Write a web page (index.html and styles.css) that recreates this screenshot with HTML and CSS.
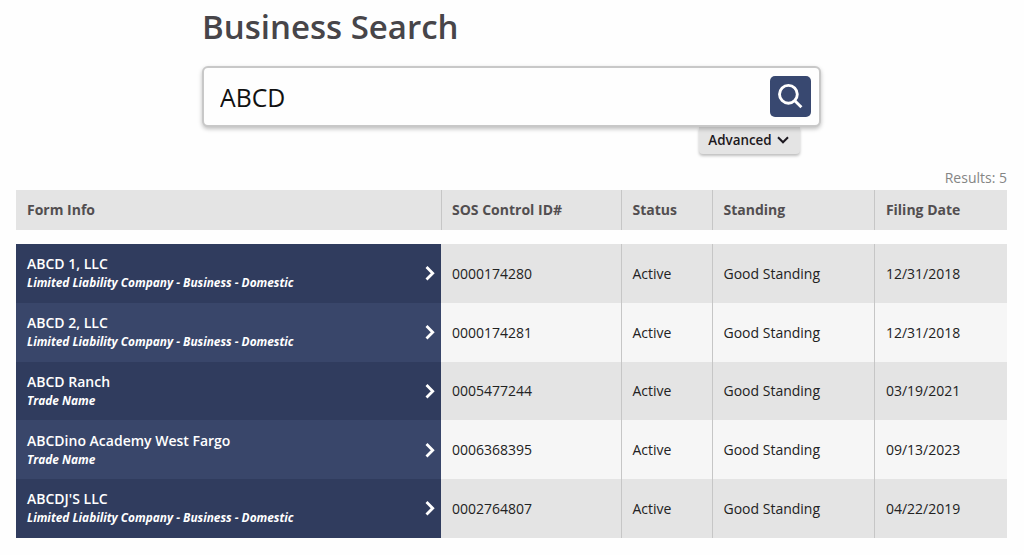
FILE: index.html
```html
<!DOCTYPE html>
<html lang="en">
<head>
    <meta charset="UTF-8">
    <meta name="viewport" content="width=device-width, initial-scale=1.0">
    <title>Business Search</title>
    <link rel="stylesheet" href="styles.css">
</head>
<body>
    <div class="search">
        <h1>Business Search</h1>
        <div class="search-box">
            <input type="text" class="search-input" value="ABCD" aria-label="Search">
            <button class="search-btn" aria-label="Run search">
                <svg width="41" height="41" viewBox="0 0 41 41">
                    <circle cx="18.4" cy="18.3" r="8.9"/>
                    <path d="M24.6 24.5L31.4 31.3"/>
                </svg>
            </button>
        </div>
        <button class="advanced">
            <span>Advanced</span>
            <svg width="12" height="8" viewBox="0 0 12 8"><path d="M1 1.3L6 6.3L11 1.3"/></svg>
        </button>
    </div>

    <div class="results">Results: 5</div>

    <div class="table">
        <div class="row head">
            <div class="cell">Form Info</div>
            <div class="cell">SOS Control ID#</div>
            <div class="cell">Status</div>
            <div class="cell">Standing</div>
            <div class="cell">Filing Date</div>
        </div>
        <div class="rows">
            <div class="row">
                <div class="info">
                    <div>
                        <div class="name">ABCD 1, LLC</div>
                        <div class="type">Limited Liability Company - Business - Domestic</div>
                    </div>
                    <svg class="arrow" width="10" height="16" viewBox="0 0 10 16"><path d="M1.5 2L7.7 8.2L1.5 14.4"/></svg>
                </div>
                <div class="cell">0000174280</div>
                <div class="cell">Active</div>
                <div class="cell">Good Standing</div>
                <div class="cell">12/31/2018</div>
            </div>
            <div class="row">
                <div class="info">
                    <div>
                        <div class="name">ABCD 2, LLC</div>
                        <div class="type">Limited Liability Company - Business - Domestic</div>
                    </div>
                    <svg class="arrow" width="10" height="16" viewBox="0 0 10 16"><path d="M1.5 2L7.7 8.2L1.5 14.4"/></svg>
                </div>
                <div class="cell">0000174281</div>
                <div class="cell">Active</div>
                <div class="cell">Good Standing</div>
                <div class="cell">12/31/2018</div>
            </div>
            <div class="row">
                <div class="info">
                    <div>
                        <div class="name">ABCD Ranch</div>
                        <div class="type">Trade Name</div>
                    </div>
                    <svg class="arrow" width="10" height="16" viewBox="0 0 10 16"><path d="M1.5 2L7.7 8.2L1.5 14.4"/></svg>
                </div>
                <div class="cell">0005477244</div>
                <div class="cell">Active</div>
                <div class="cell">Good Standing</div>
                <div class="cell">03/19/2021</div>
            </div>
            <div class="row">
                <div class="info">
                    <div>
                        <div class="name">ABCDino Academy West Fargo</div>
                        <div class="type">Trade Name</div>
                    </div>
                    <svg class="arrow" width="10" height="16" viewBox="0 0 10 16"><path d="M1.5 2L7.7 8.2L1.5 14.4"/></svg>
                </div>
                <div class="cell">0006368395</div>
                <div class="cell">Active</div>
                <div class="cell">Good Standing</div>
                <div class="cell">09/13/2023</div>
            </div>
            <div class="row">
                <div class="info">
                    <div>
                        <div class="name">ABCDJ'S LLC</div>
                        <div class="type">Limited Liability Company - Business - Domestic</div>
                    </div>
                    <svg class="arrow" width="10" height="16" viewBox="0 0 10 16"><path d="M1.5 2L7.7 8.2L1.5 14.4"/></svg>
                </div>
                <div class="cell">0002764807</div>
                <div class="cell">Active</div>
                <div class="cell">Good Standing</div>
                <div class="cell">04/22/2019</div>
            </div>
        </div>
    </div>
</body>
</html>
```
FILE: styles.css
```css
* {
    box-sizing: border-box;
}
body {
    margin: 0;
    font-family: "Open Sans", sans-serif;
    font-size: 14px;
    color: #222;
    background-color: #fefefe;
}
svg {
    display: block;
    fill: none;
}
button {
    border: none;
    padding: 0;
    font-family: inherit;
}
.search {
    width: 619px;
    margin-left: 202px;
    display: flex;
    flex-direction: column;
}
h1 {
    margin: 0;
    height: 66px;
    line-height: 53px;
    font-size: 33px;
    font-weight: 600;
    color: #474549;
}
.search-box {
    display: flex;
    align-items: center;
    height: 61px;
    padding: 0 8px 0 16px;
    background-color: #fefefe;
    border: 2px solid #c8c8c8;
    border-radius: 6px;
    box-shadow: 0 2px 4px rgba(0, 0, 0, 0.25);
    z-index: 1;
}
.search-input {
    flex: 1;
    min-width: 0;
    border: none;
    outline: none;
    padding: 1px 0 0;
    background: none;
    font-family: inherit;
    font-size: 24.8px;
    color: #111;
}
.search-btn {
    width: 41px;
    height: 41px;
    border-radius: 5px;
    background-color: #384870;
}
.search-btn svg {
    stroke: white;
    stroke-width: 2.9;
}
.advanced {
    display: flex;
    align-items: center;
    justify-content: center;
    gap: 5px;
    align-self: flex-end;
    width: 101px;
    height: 27px;
    margin-right: 21px;
    padding: 0 2px 1px 0;
    background-color: #e4e4e4;
    border-radius: 0 0 4px 4px;
    box-shadow: 0 2px 3px rgba(0, 0, 0, 0.25);
    font-size: 13.4px;
    font-weight: 600;
    color: #1c1820;
}
.advanced svg {
    stroke: #1c1820;
    stroke-width: 2;
}
.results {
    height: 36px;
    padding: 14px 17px 0 0;
    line-height: 20px;
    text-align: right;
    color: #858585;
}
.table {
    width: 991px;
    margin-left: 16px;
}
.row {
    display: grid;
    grid-template-columns: 425px 180px 91px 162.4px 132.6px;
    height: 58.75px;
    background-color: #e4e4e4;
}
.row:nth-child(even) {
    background-color: #f6f6f6;
}
.head {
    height: 40px;
    margin-bottom: 14px;
    font-weight: 700;
    color: #524e50;
}
.cell {
    display: flex;
    align-items: center;
    padding-left: 10.5px;
    border-left: 1px solid #c6c6c6;
}
.head .cell {
    padding-bottom: 1px;
}
.head .cell:first-child {
    padding-left: 10px;
    border-left-color: transparent;
}
.info {
    display: flex;
    align-items: center;
    justify-content: space-between;
    padding: 0 6px 0 11px;
    background-color: #303c5e;
    color: white;
}
.row:nth-child(even) .info {
    background-color: #39466a;
}
.info + .cell,
.head .cell:nth-child(2) {
    padding-left: 10px;
}
.info + .cell {
    border-left-color: transparent;
}
.name {
    line-height: 18px;
    font-weight: 600;
}
.type {
    line-height: 18px;
    font-size: 11.85px;
    font-weight: 700;
    font-style: italic;
}
.arrow {
    stroke: white;
    stroke-width: 2.8;
}
```
